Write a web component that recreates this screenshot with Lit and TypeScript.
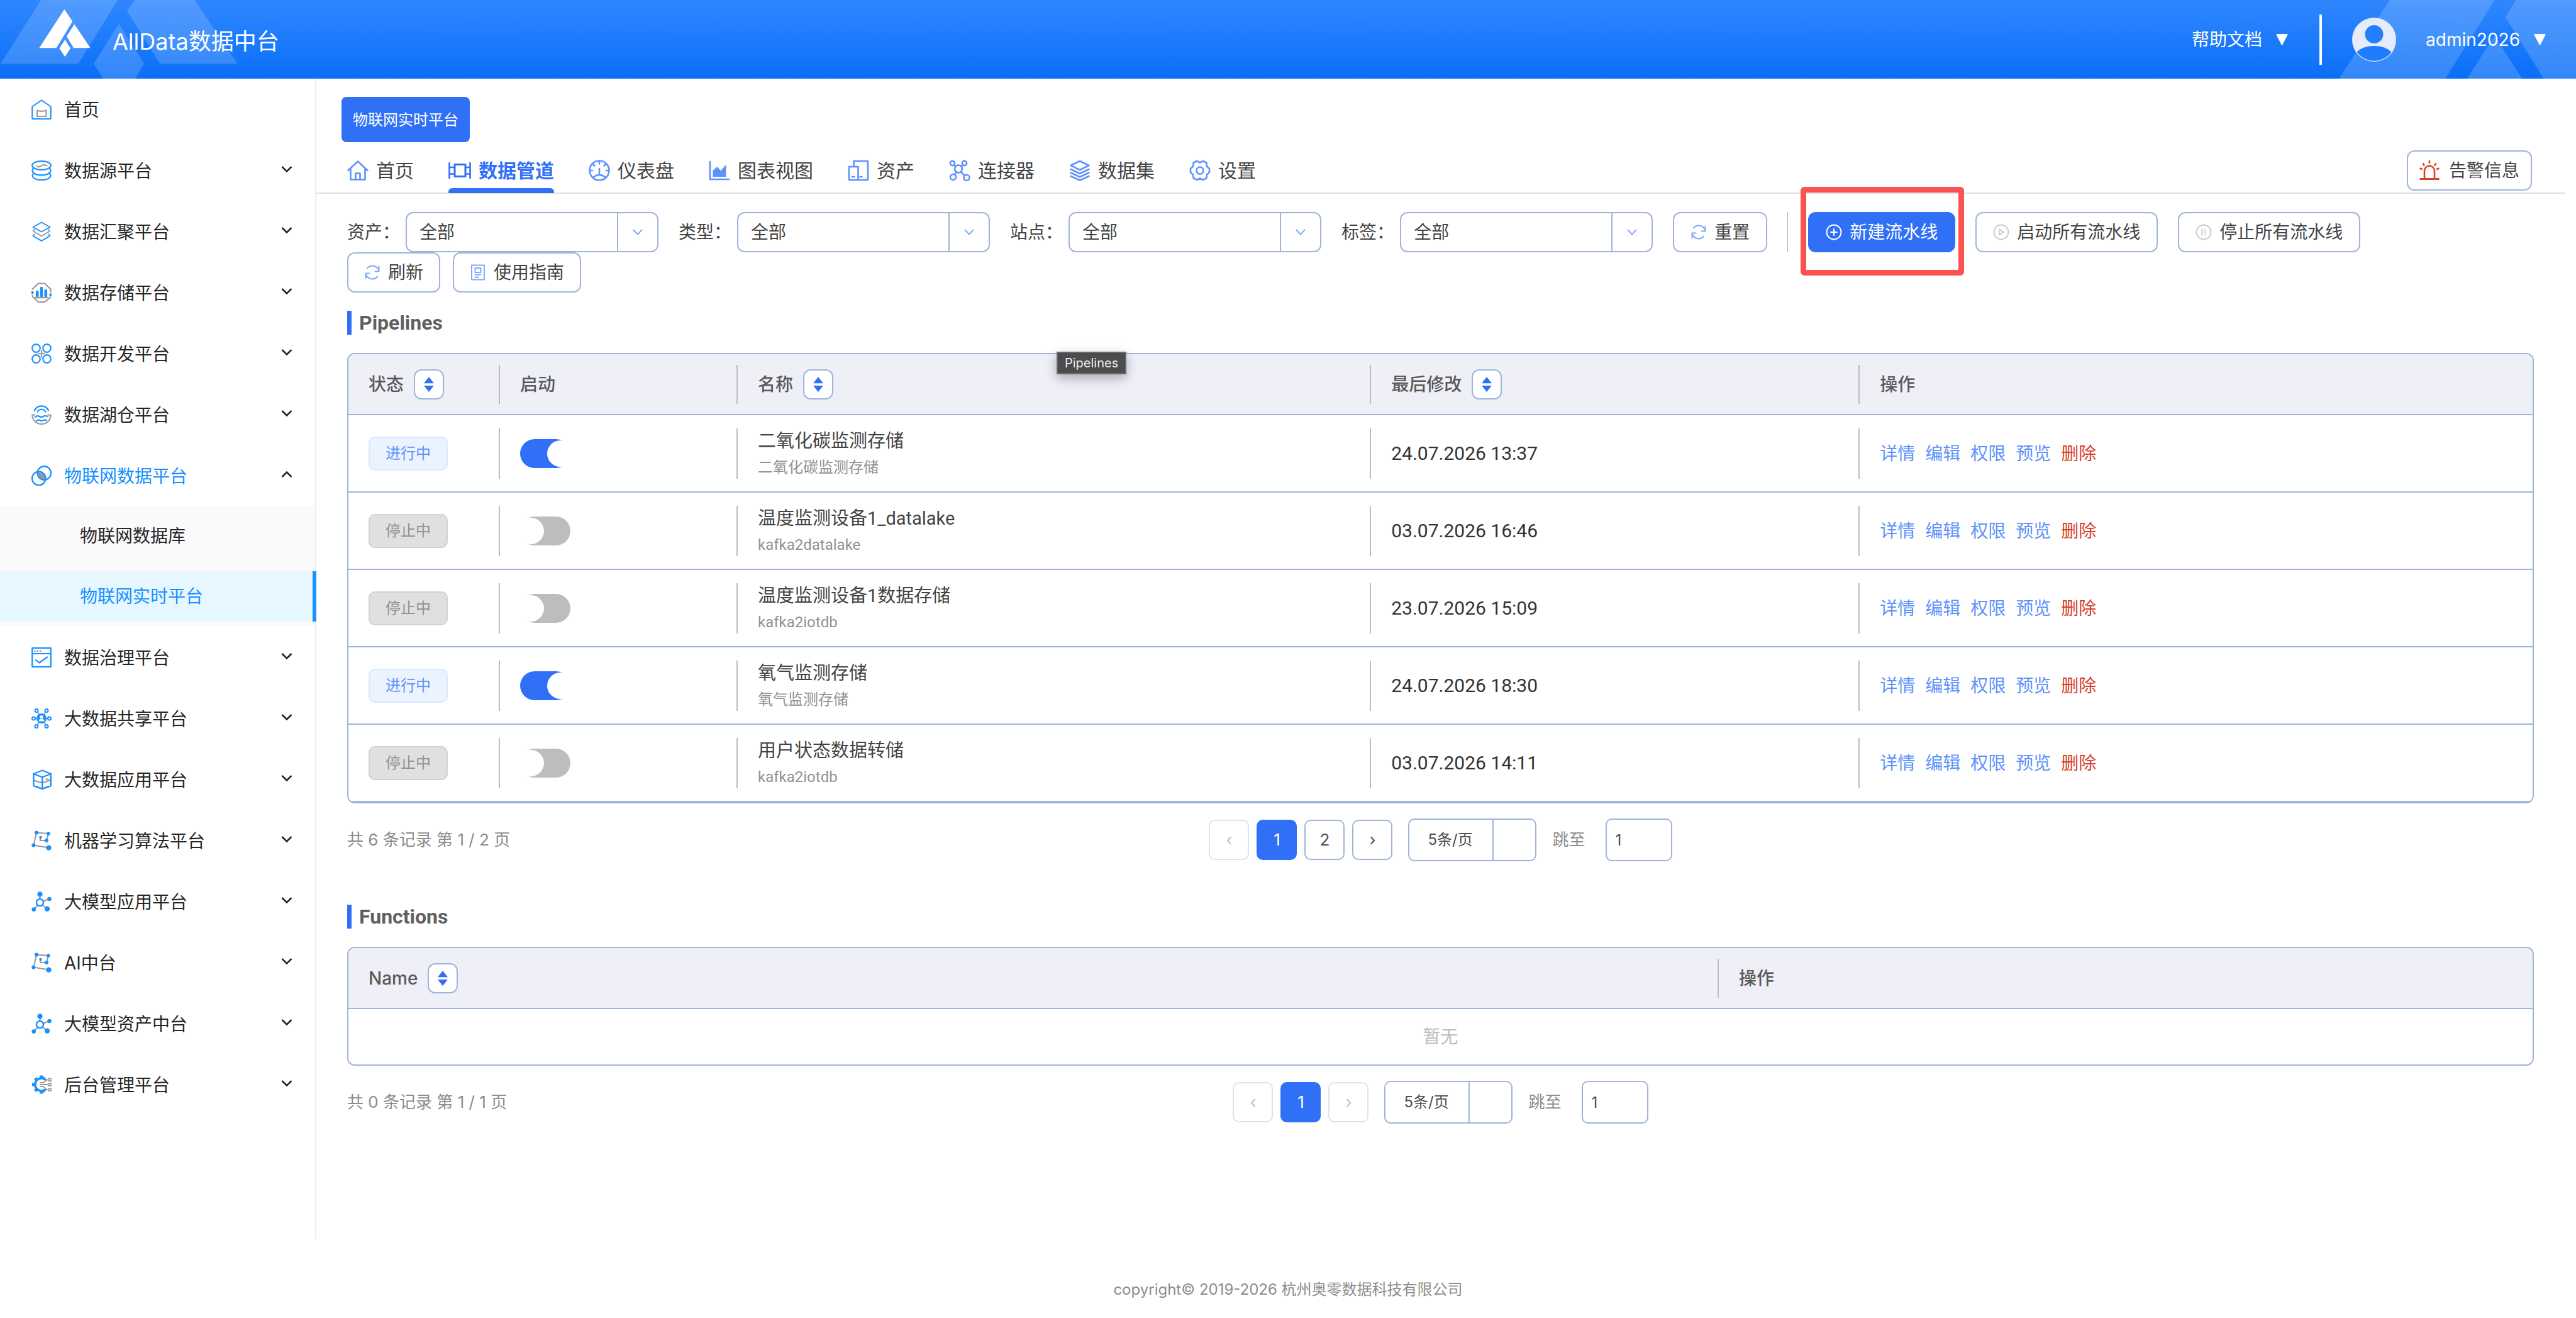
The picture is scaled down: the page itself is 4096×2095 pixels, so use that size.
import { LitElement, html, css, svg, nothing } from "lit";
import type { TemplateResult } from "lit";
import { customElement, property, state } from "lit/decorators.js";
import { classMap } from "lit/directives/class-map.js";

/* ---------- icons ---------- */

const B = "#1890ff";
const G = "#999999";
const T = "#5e92fb";

const menuIcons: Record<string, TemplateResult> = {
  home: svg`<path d="M16 1.2 30.8 11.5V30q0 1-1 1H2.200q-1 0-1-1V11.500Z" stroke=${B} stroke-width="2"/>
    <path d="M9 17.500q7 2.600 14.500 0V27H9Z" stroke=${G} stroke-width="2.200"/>`,
  db: svg`<g stroke=${B} stroke-width="2.200"><ellipse cx="16" cy="8" rx="14.800" ry="6.900"/>
    <path d="M4 12C-1 15 1 23.300 16 23.300S33 15 28 12M4 20C-1 23 1 31 16 31S33 23 28 20"/></g>
    <path d="M8.500 8.500 11 10.500C15 10 17 6.800 20 6.800L24.500 8.500" stroke=${G} stroke-width="2"/>`,
  layers: svg`<path d="M5 12.500 3 15.500 16 23.500 29 15.500 27 12.500" stroke=${G} stroke-width="2"/>
    <path d="M16 1.500 29.500 9 16 16.500 2.500 9ZM4.500 20.500 2.500 23 16 30.800 29.500 23 27.500 20.500" stroke=${B} stroke-width="2"/>`,
  storage: svg`<path d="M1.500 10.500 11 1.500H21L30.500 10.500V15M1.500 20.500V22L11 31H21L30.500 23.500" stroke=${G} stroke-width="2.200"/>
    <path d="M9.200 21.500V15M16 21.500V9M22.800 21.500V13" stroke=${B} stroke-width="4.600"/>
    <path d="M6.500 24H25.500" stroke=${G} stroke-width="2.600"/>
    <circle cx="1.500" cy="16" r="2.200" fill=${B}/><circle cx="30.500" cy="19.500" r="2.200" fill=${B}/>`,
  dev: svg`<g stroke=${B} stroke-width="2.200"><circle cx="7.500" cy="7.500" r="6.300"/><circle cx="24.500" cy="7.500" r="6.300"/>
    <circle cx="7.500" cy="24.500" r="6.300"/><circle cx="24.500" cy="24.500" r="6.300"/></g>
    <path d="M16 11V21M11 16H21" stroke=${G} stroke-width="2.200"/>`,
  lake: svg`<g stroke=${B} stroke-width="2.200"><path d="M5 9.500A12 12 0 0 1 27 9.500M9.500 11.500A7.500 7.500 0 0 1 22.500 11.500"/>
    <path d="M6 20q3.500-3 6.500-1t6 0 7.500 0M8 26q3-2.500 5.500-.8t5 0 5.500 0"/></g>
    <path d="M5.500 16.500H1.200C2 26 8 31 16 31S30 26 30.800 16.500H26.500" stroke=${G} stroke-width="2.200"/>`,
  iot: svg`<path d="M9.400 11.200A11 11 0 0 1 22.700 23.100A11 11 0 0 1 9.400 11.200Z" fill=${G}/>
    <g stroke=${B} stroke-width="2.200"><circle cx="20.300" cy="12" r="10.800"/><circle cx="11.800" cy="20.500" r="10.800"/></g>`,
  govern: svg`<path d="M1.200 1.200H30.800V30.800H1.200ZM1.200 10H30.800M7 20 12.500 24.500 25 15.500" stroke=${B} stroke-width="2.200"/>
    <path d="M5 5.800h.5M9.500 5.800h.5M14 5.800h.5" stroke=${G} stroke-width="2.600"/>`,
  share: svg`<path d="M16 16 8 3.500M16 16 24 3.500M16 16H3M16 16H29M16 16 8 28.500M16 16 24 28.500" stroke=${G} stroke-width="2"/>
    <g stroke=${B} stroke-width="2" fill="#fff"><circle cx="8" cy="3.500" r="2.500"/><circle cx="24" cy="3.500" r="2.500"/>
    <circle cx="3.500" cy="16" r="2.500"/><circle cx="28.500" cy="16" r="2.500"/><circle cx="8" cy="28.500" r="2.500"/><circle cx="24" cy="28.500" r="2.500"/></g>
    <circle cx="16" cy="16" r="8" fill=${B}/><circle cx="16" cy="13.500" r="2.600" fill="#fff"/><path d="M11.500 20.500q0-4 4.500-4t4.500 4Z" fill="#fff"/>`,
  cube: svg`<path d="M6 18Q17 23.500 28.500 17.500L23.500 15" stroke=${G} stroke-width="2.200"/>
    <path d="M17.200 1.500 30.800 7V26L17.200 31 3.500 26V7ZM3.500 7 17.200 12.500 30.800 7M17.200 12.500V31" stroke=${B} stroke-width="2.400"/>`,
  algo: svg`<path d="M3.500 23.500 8 3.500 27 5 24 16H14V11M3.500 23.500 27.500 27.500" stroke=${G} stroke-width="2"/>
    <g fill=${B}><circle cx="8" cy="3.500" r="3"/><circle cx="27" cy="5" r="2.800"/><circle cx="24" cy="16" r="3"/>
    <circle cx="14.500" cy="11" r="2.200"/><circle cx="3.300" cy="23.500" r="3"/><circle cx="27.500" cy="27.600" r="4.200"/></g>`,
  model: svg`<path d="M13.500 17.500V5M13.500 17.500 28.500 12M13.500 17.500 25 28M13.500 17.500 3.700 29" stroke=${G} stroke-width="2.200"/>
    <g fill=${B}><circle cx="13.500" cy="4.400" r="4.200"/><circle cx="28.500" cy="12" r="3.300"/><circle cx="25" cy="27.600" r="4.200"/><circle cx="3.700" cy="28.600" r="3.300"/></g>
    <circle cx="13.500" cy="17.500" r="5.500" stroke=${B} stroke-width="2.400" fill="#fff"/>`,
  admin: svg`<path d="M21.500 7.800A10 10 0 1 0 21.500 24.200" stroke=${B} stroke-width="3.600"/>
    <path d="M15.500 6.500V1.500M15.500 25.500V30.500M6 16H1M9 9 5.800 5.800M9 23 5.800 26.200M20 5.500 21 4.500M20 26.500 21 27.500" stroke=${B} stroke-width="5" stroke-linecap="butt"/>
    <path d="M14 12.800H19L24 8.500H27M14 16H26.500M14 19.200H19L24 23.800H27" stroke=${G} stroke-width="1.800"/>
    <g stroke=${G} stroke-width="1.800"><circle cx="29.300" cy="8.300" r="2.200"/><circle cx="29.300" cy="16" r="2.200"/><circle cx="29.300" cy="24" r="2.200"/></g>`,
};

const tabIcons: Record<string, TemplateResult> = {
  home: svg`<path d="M1.500 17 17 2.500 32.500 17M5.500 14V31.500H28.500V14M13.500 31V21.500H20.500V31" stroke=${T} stroke-width="2.600"/>`,
  pipe: svg`<path d="M1.500 5V29M34.500 5V29M1.500 12H34.500M1.500 22.500H34.500" stroke="currentColor" stroke-width="2.600"/>
    <rect x="10" y="7.500" width="17" height="19" fill="#fff" stroke="currentColor" stroke-width="3"/>`,
  gauge: svg`<g stroke=${T} stroke-width="2.600"><circle cx="17" cy="17" r="15.500"/>
    <path d="M17 14V24M7 28Q17 20 27 28M17 3V6.500M3 17H6M28 17H31M7.500 7.500 9.500 9.500M26.500 7.500 24.500 9.500"/></g>`,
  chart: svg`<path d="M2 3V31H32" stroke=${T} stroke-width="2.600"/><path d="M6.500 27V17L13.500 11 19 17.500 27.500 7.500V27Z" fill=${T}/>`,
  asset: svg`<path d="M9.500 11V2H32V32H2V11H16.500V32M7 27h3.500M19.500 27h3" stroke=${T} stroke-width="2.600"/>`,
  link: svg`<g stroke=${T} stroke-width="2.600"><circle cx="5.500" cy="5.500" r="3.600"/><circle cx="24.500" cy="5.500" r="3.600"/>
    <circle cx="15" cy="14.500" r="6"/><circle cx="6.500" cy="27.500" r="4.500"/><circle cx="28" cy="28.500" r="4.500"/>
    <path d="M8.200 8 10.500 10.500M21.800 8 19.500 10.500M11.800 19.800 9 23.500M18.800 19.200 25 25"/></g>`,
  data: svg`<path d="M17 2 31.500 9 17 16 2.500 9ZM2.500 15 17 22 31.500 15M2.500 20.500 17 27.300 31.500 20.500M2.500 26 17 32.500 31.500 26" stroke=${T} stroke-width="2.600"/>`,
  gear: svg`<path d="M12 2 17 4.500 22 2 27.500 5 28 10.500 32 14V20L28 23.500 27.500 29 22 32 17 29.500 12 32 6.500 29 6 23.500 2 20V14L6 10.500 6.500 5Z" stroke=${T} stroke-width="2.600"/>
    <circle cx="17" cy="17" r="5.500" stroke=${T} stroke-width="2.600"/>`,
};

const buttonIcons: Record<string, TemplateResult> = {
  refresh: svg`<path d="M5 6.500A10.500 10.500 0 0 1 23.500 11.500M23.500 3.500V11.500H17.500M21 19.500A10.500 10.500 0 0 1 2.500 14.500M2.500 22.500V14.500H8.500" stroke="#84a9fa" stroke-width="2"/>`,
  guide: svg`<path d="M3 1.500H23V24.500H3ZM8.500 6H17.500V13H8.500ZM8.500 16.500H17.500M8.500 20.500H13.500" stroke="#84a9fa" stroke-width="2"/>`,
  plus: svg`<path d="M13 8V18M8 13H18" stroke="#fff" stroke-width="2"/><circle cx="13" cy="13" r="11.500" stroke="#fff" stroke-width="2"/>`,
  play: svg`<circle cx="13" cy="13" r="11.500" stroke="#ccc" stroke-width="2"/><path d="M10.500 8.500V17.500L17 13Z" stroke="#ccc" stroke-width="2"/>`,
  pause: svg`<circle cx="13" cy="13" r="11.500" stroke="#ccc" stroke-width="2"/><path d="M10.500 8.500V17.500M15.500 8.500V17.500" stroke="#ccc" stroke-width="2"/>`,
};

const icon = (art: TemplateResult, size: number, width = size) => html`<svg
  class="icon" width=${width} height=${size} viewBox="0 0 ${width} ${size}" fill="none"
  stroke-linejoin="round" stroke-linecap="round" aria-hidden="true">${art}</svg>`;

/* ---------- data ---------- */

interface MenuItem { label: string; icon: string; children?: string[]; leaf?: boolean }

const menu: MenuItem[] = [
  { label: "首页", icon: "home", leaf: true },
  { label: "数据源平台", icon: "db" },
  { label: "数据汇聚平台", icon: "layers" },
  { label: "数据存储平台", icon: "storage" },
  { label: "数据开发平台", icon: "dev" },
  { label: "数据湖仓平台", icon: "lake" },
  { label: "物联网数据平台", icon: "iot", children: ["物联网数据库", "物联网实时平台"] },
  { label: "数据治理平台", icon: "govern" },
  { label: "大数据共享平台", icon: "share" },
  { label: "大数据应用平台", icon: "cube" },
  { label: "机器学习算法平台", icon: "algo" },
  { label: "大模型应用平台", icon: "model" },
  { label: "AI中台", icon: "algo" },
  { label: "大模型资产中台", icon: "model" },
  { label: "后台管理平台", icon: "admin" },
];

const tabs = [
  { label: "首页", icon: "home" },
  { label: "数据管道", icon: "pipe" },
  { label: "仪表盘", icon: "gauge" },
  { label: "图表视图", icon: "chart" },
  { label: "资产", icon: "asset" },
  { label: "连接器", icon: "link" },
  { label: "数据集", icon: "data" },
  { label: "设置", icon: "gear" },
];

const filters = ["资产", "类型", "站点", "标签"];

const pipelines = [
  { running: true, name: "二氧化碳监测存储", note: "二氧化碳监测存储", date: "24.07.2026 13:37" },
  { running: false, name: "温度监测设备1_datalake", note: "kafka2datalake", date: "03.07.2026 16:46" },
  { running: false, name: "温度监测设备1数据存储", note: "kafka2iotdb", date: "23.07.2026 15:09" },
  { running: true, name: "氧气监测存储", note: "氧气监测存储", date: "24.07.2026 18:30" },
  { running: false, name: "用户状态数据转储", note: "kafka2iotdb", date: "03.07.2026 14:11" },
];

const base = css`
  * { box-sizing: border-box; }
  button, select, input { font: inherit; color: inherit; margin: 0; }
  button { cursor: pointer; }
  a { color: inherit; text-decoration: none; }
  .icon { display: block; flex: none; }
`;

/* ---------- header ---------- */

@customElement("top-bar")
class TopBar extends LitElement {
  static styles = [base, css`
    :host { display: block; }
    .bar {
      position: relative; display: flex; align-items: center; height: 125px;
      padding: 0 48px 0 62px; color: #fff; overflow: hidden;
      background: linear-gradient(#2f87ff, #0a6ff8);
    }
    .deco { position: absolute; top: 0; fill: #fff; fill-opacity: 0.17; }
    .left { left: 0; }
    .right { right: 0; }
    .brand, .tools { position: relative; display: flex; align-items: center; }
    .brand { height: 100%; gap: 35px; }
    .brand svg { align-self: flex-start; margin-top: 14px; }
    .title { margin: 0; padding-top: 6px; font-size: 36px; line-height: 48px; font-weight: 400; }
    .tools { margin-left: auto; font-size: 28px; line-height: 40px; }
    .menu { display: flex; align-items: center; gap: 22px; padding: 0; border: 0; background: none; }
    .rule { width: 4px; height: 80px; margin: 0 48px 0 50px; background: #fff; }
    .avatar { margin-right: 47px; }
  `];

  private caret() {
    return html`<svg class="icon" width="19" height="18" viewBox="0 0 19 18" aria-hidden="true">
      <path d="M1.500 1H17.500L9.500 16.500Z" fill="#fff" stroke="#fff" stroke-width="2" stroke-linejoin="round"/></svg>`;
  }

  render() {
    return html`<header class="bar">
      <svg class="deco left" width="380" height="125" viewBox="0 0 415.500 136.700" aria-hidden="true">
        <path d="M71.400 0H204.600L136.400 110.700H1ZM234 0H338.600L412.900 110.700H278.200L220.700 19ZM206.800 41.300 250.700 110.700H162.900ZM162.900 110.700H250.700L235 137H179.600Z"/>
      </svg>
      <svg class="deco right" width="380" height="125" viewBox="4062.500 0 415.500 136.700" aria-hidden="true">
        <path d="M4154 0H4336.600L4250.800 137H4065.700ZM4373.300 0H4478V137H4422L4355.500 30ZM4336 62 4384.700 137H4288.500Z"/>
      </svg>
      <div class="brand">
        <svg width="82" height="77" viewBox="67.500 15.500 90 84" fill="#fff" aria-hidden="true">
          <path d="M111.800 16 126 37.300 97.900 83.700H67.900ZM129.300 42 157.100 83.700H127.900L115.700 63.300ZM112.900 69 122.500 84 112.900 99 103 84Z"/>
        </svg>
        <h1 class="title">AllData数据中台</h1>
      </div>
      <div class="tools">
        <button class="menu" type="button">帮助文档 ${this.caret()}</button>
        <div class="rule"></div>
        <svg class="icon avatar" width="70" height="70" viewBox="0 0 70 70" aria-hidden="true">
          <circle cx="35" cy="35" r="35" fill="#e6ebfa"/>
          <circle cx="35" cy="26.500" r="14.500" fill="#2380fd"/>
          <path d="M7.500 54.500Q17 45 35 45T62.500 54.500A33.800 33.800 0 0 1 7.500 54.500Z" fill="#1f7cfc"/>
        </svg>
        <button class="menu" type="button">admin2026 ${this.caret()}</button>
      </div>
    </header>`;
  }
}

/* ---------- sidebar ---------- */

@customElement("side-menu")
class SideMenu extends LitElement {
  @state() private open = "物联网数据平台";
  @state() private current = "物联网实时平台";

  static styles = [base, css`
    :host { display: block; flex: none; width: 503px; border-right: 2px solid #eeeeee; }
    ul { margin: 0; padding: 0; list-style: none; }
    .entry { display: flow-root; }
    .item {
      display: flex; align-items: center; width: 100%; height: 80px; margin: 9px 0 8px;
      padding: 0 36px 0 50px; border: 0; background: none; gap: 20px;
      font-size: 28px; line-height: 40px; color: #262626; text-align: left;
    }
    .label { flex: 1; padding-top: 2px; }
    .opened .label { color: #1890ff; }
    .sub { display: grid; gap: 16px; padding: 8px 0; background: #fafafa; }
    .leaf {
      display: flex; align-items: center; height: 80px; padding-left: 127px;
      font-size: 28px; line-height: 40px; color: #262626;
    }
    .leaf.on { margin-right: -2px; border-right: 6px solid #1890ff; background: #e6f7ff; color: #1890ff; }
    .arrow { margin-bottom: 5px; }
    .up { transform: rotate(180deg); }
  `];

  render() {
    return html`<nav aria-label="主菜单"><ul>
      ${menu.map((m) => {
        const opened = !!m.children && m.label === this.open;
        return html`<li class="entry">
          <button type="button" class=${classMap({ item: true, opened })}
            @click=${() => { if (m.children) this.open = opened ? "" : m.label; }}>
            ${icon(menuIcons[m.icon], 32)}
            <span class="label">${m.label}</span>
            ${m.leaf ? nothing : html`<svg class=${classMap({ icon: true, arrow: true, up: opened })} width="18" height="12" viewBox="0 0 18 12" fill="none" aria-hidden="true">
              <path d="M1.500 2 9 9.500 16.500 2" stroke="#222" stroke-width="2.600"/></svg>`}
          </button>
          ${opened ? html`<ul class="sub">${m.children!.map((c) => html`<li>
            <a href="#" class=${classMap({ leaf: true, on: c === this.current })}
              @click=${(e: Event) => { e.preventDefault(); this.current = c; }}>${c}</a></li>`)}</ul>` : nothing}
        </li>`;
      })}
    </ul></nav>`;
  }
}

/* ---------- pagination ---------- */

@customElement("page-bar")
class PageBar extends LitElement {
  @property({ type: Number }) total = 0;
  @property({ type: Number }) pages = 1;
  @property({ type: Number }) page = 1;

  static styles = [base, css`
    :host { display: block; margin-top: 24px; font-size: 26px; line-height: 36px; color: #8c8c8c; }
    .row { display: grid; grid-template-columns: 1fr auto 1fr; align-items: center; height: 68px; }
    .controls { display: flex; align-items: center; gap: 12px; }
    .page {
      width: 64px; height: 64px; padding: 0; border: 2px solid #a0b3dc; border-radius: 10px;
      background: #fff; color: #4d4d4d;
    }
    .page.on { border-color: #3070f6; background: #3070f6; color: #fff; }
    .page:disabled { border-color: #dbe3f3; color: #bfbfbf; cursor: default; }
    .size {
      display: flex; width: 204px; height: 68px; margin-left: 13px;
      border: 2px solid #a0b3dc; border-radius: 10px; overflow: hidden;
    }
    .size select {
      flex: 1; min-width: 0; padding: 0 0 0 29px; border: 0; outline: 0; appearance: none;
      background: none; font-size: 24px; color: #4d4d4d;
    }
    .cap { width: 68px; border-left: 2px solid #a0b3dc; }
    .jump { display: flex; align-items: center; gap: 32px; margin-left: 13px; }
    .jump input {
      width: 106px; height: 68px; padding: 0 14px; border: 2px solid #a0b3dc; border-radius: 10px;
      background: #fff; font-size: 24px; color: #4d4d4d; outline: 0;
    }
  `];

  render() {
    const nums = Array.from({ length: this.pages }, (_, i) => i + 1);
    return html`<div class="row">
      <span>共 ${this.total} 条记录 第 ${this.page} / ${this.pages} 页</span>
      <div class="controls">
        <button class="page" type="button" aria-label="上一页" ?disabled=${this.page <= 1}
          @click=${() => (this.page -= 1)}>‹</button>
        ${nums.map((n) => html`<button type="button" class=${classMap({ page: true, on: n === this.page })}
          @click=${() => (this.page = n)}>${n}</button>`)}
        <button class="page" type="button" aria-label="下一页" ?disabled=${this.page >= this.pages}
          @click=${() => (this.page += 1)}>›</button>
        <div class="size"><select aria-label="每页条数"><option>5条/页</option></select><span class="cap"></span></div>
        <label class="jump">跳至<input type="text" inputmode="numeric" .value=${String(this.page)}></label>
      </div>
    </div>`;
  }
}

/* ---------- workspace ---------- */

@customElement("iot-workspace")
class IotWorkspace extends LitElement {
  @state() private tab = "数据管道";

  static styles = [base, css`
    :host { display: block; flex: 1; min-width: 0; padding-top: 29px; color: #444; }
    .crumb {
      display: block; height: 72px; margin-left: 40px; padding: 2px 18px 0; border: 0; border-radius: 8px;
      background: #3070f6; color: #fff; font-size: 24px; line-height: 36px;
    }
    .tabs {
      display: flex; align-items: center; margin-right: 18px; padding: 10px 52px 0 49px;
      border-bottom: 2px solid #e0e0e0;
    }
    .strip { display: flex; gap: 55px; }
    .tab {
      position: relative; display: flex; align-items: center; gap: 12px; height: 70px; padding: 0;
      border: 0; background: none; font-size: 30px; line-height: 40px; color: #444;
    }
    .tab.on { color: #3070f6; font-weight: 700; }
    .tab.on::after {
      content: ""; position: absolute; left: 0; right: 0; bottom: -1px; height: 8px;
      border-radius: 6px 6px 0 0; background: #3070f6;
    }
    .btn {
      display: flex; align-items: center; gap: 12px; height: 64px; padding: 0 26px;
      border: 2px solid #a0b3dc; border-radius: 12px; background: #fff;
      font-size: 28px; line-height: 40px; color: #444; white-space: nowrap;
    }
    .alarm { margin-left: auto; padding: 0 18px; gap: 15px; }
    .primary { border-color: #3070f6; background: #3070f6; color: #fff; }
    .tools { display: flex; flex-wrap: wrap; column-gap: 32px; padding: 29px 67px 0 49px; font-size: 28px; line-height: 40px; }
    .filter { display: flex; align-items: center; gap: 9px; }
    .select {
      display: flex; width: 402px; height: 64px; border: 2px solid #a0b3dc; border-radius: 12px;
    }
    .select select {
      flex: 1; min-width: 0; padding: 0 0 0 20px; border: 0; outline: 0; appearance: none; background: none;
    }
    .cap {
      display: flex; align-items: center; justify-content: center; width: 64px;
      border-left: 2px solid #a0b3dc;
    }
    .split { width: 1px; height: 64px; background: #b0b0b0; }
    .focus { position: relative; }
    .ring {
      position: absolute; inset: -40px -14px -37px -12px; border: 9px solid #fb5352; border-radius: 6px;
      pointer-events: none;
    }
    .pair { display: flex; gap: 20px; }
    .pair .btn { padding: 0 25px; }
    .panel { position: relative; padding: 29px 67px 0 49px; }
    .panel + .panel { padding-top: 69px; }
    h2 {
      margin: 0 0 29px; padding-left: 12px; border-left: 7px solid #3070f6;
      font: 700 32px/38px Roboto, "Noto Sans CJK SC", sans-serif; color: #606060;
    }
    .frame { border: 2px solid #a0b3dc; border-radius: 12px; overflow: hidden; }
    table { width: 100%; border-collapse: separate; border-spacing: 0; table-layout: fixed; }
    .c-state { width: 241px; }
    .c-on { width: 378px; }
    .c-name { width: 29%; }
    .c-date { width: 777px; }
    .c-ops { width: 1294px; }
    th, td { padding: 0; border-bottom: 2px solid #a0b3dc; font-weight: 400; text-align: left; }
    thead { background: #efeff8; color: #595959; font-size: 28px; line-height: 40px; }
    .hcell, .cell { display: flex; align-items: center; padding-left: 32px; border-right: 2px solid #bdbdbd; }
    .hcell { height: 62px; margin: 17px 0 16px; gap: 16px; font-weight: 500; }
    .cell { height: 80px; margin: 21px 0 20px; }
    th:last-child .hcell, td:last-child .cell { border-right: 0; }
    .sort {
      display: flex; align-items: center; justify-content: center; width: 48px; height: 48px; padding: 0;
      border: 2px solid #a0b3dc; border-radius: 12px; background: #fff;
    }
    .badge {
      width: 126px; height: 54px; border: 2px solid #d9e9ff; border-radius: 10px; background: #ebf3ff;
      color: #5e92fb; font-size: 24px; line-height: 50px; text-align: center;
    }
    .badge.off { border-color: #d3d3d3; background: #e0e0e0; color: #909090; }
    .switch {
      position: relative; width: 80px; height: 46px; margin: 0; appearance: none;
      border-radius: 23px; background: #bdbdbd;
    }
    .switch::before {
      content: ""; position: absolute; top: 2px; left: -4px; width: 42px; height: 42px;
      border-radius: 50%; background: #fff;
    }
    .switch:checked { background: #3070f6; }
    .switch:checked::before { left: 43px; }
    .name { font: 400 29px/44px Roboto, "Noto Sans CJK SC", sans-serif; color: #444; }
    .note { font: 400 24px/40px Roboto, "Noto Sans CJK SC", sans-serif; color: #929292; }
    .date { font: 400 30px/40px Roboto, "Noto Sans CJK SC", sans-serif; color: #333; }
    .ops { gap: 16px; font-size: 28px; line-height: 40px; color: #5e92fb; }
    .danger { color: #d9402b; }
    .empty { height: 88px; border-bottom: 0; font-size: 28px; text-align: center; color: #bdbdbd; }
    .tip {
      position: absolute; left: 1177px; top: 94px; padding: 0 11px; border: 2px solid #6a6a6c;
      background: #4b4c4e; color: #ededed; font-size: 20px; line-height: 32px;
      box-shadow: 0 6px 18px rgba(0, 0, 0, 0.3);
    }
  `];

  private sorter() {
    return html`<button class="sort" type="button" aria-label="排序">
      <svg class="icon" width="16" height="24" viewBox="0 0 16 24" fill="#3070f6" aria-hidden="true">
        <path d="M8 0 16 10.200H0ZM0 14H16L8 24Z"/></svg></button>`;
  }

  private btn(label: string, art: string, cls = "") {
    return html`<button type="button" class="btn ${cls}">${icon(buttonIcons[art], 26)}${label}</button>`;
  }

  render() {
    return html`
      <button class="crumb" type="button">物联网实时平台</button>
      <div class="tabs">
        <div class="strip" role="tablist">
          ${tabs.map((t) => html`<button type="button" role="tab" aria-selected=${t.label === this.tab}
            class=${classMap({ tab: true, on: t.label === this.tab })} @click=${() => (this.tab = t.label)}>
            ${icon(tabIcons[t.icon], 34, t.icon === "pipe" ? 36 : 34)}${t.label}</button>`)}
        </div>
        <button type="button" class="btn alarm">
          <svg class="icon" width="32" height="32" viewBox="0 0 32 32" fill="none" stroke="#d9402b" stroke-width="2.600" aria-hidden="true">
            <path d="M8 29V16.500a8 8 0 0 1 16 0V29M16 0V5M5.500 4.500 8 8.500M26.500 4.500 24 8.500M.5 12.500 5 14.200M31.500 12.500 27 14.200"/>
            <path d="M.5 29.500H31.500" stroke-width="3"/></svg>告警信息</button>
      </div>
      <div class="tools">
        ${filters.map((f) => html`<label class="filter">${f}：<span class="select">
          <select><option>全部</option></select><span class="cap">
            <svg class="icon" width="16" height="10" viewBox="0 0 16 10" fill="none" aria-hidden="true">
              <path d="M1 1 8 8.500 15 1" stroke="#84a9fa" stroke-width="2"/></svg></span></span></label>`)}
        ${this.btn("重置", "refresh")}
        <span class="split"></span>
        <div class="focus">${this.btn("新建流水线", "plus", "primary")}<span class="ring"></span></div>
        ${this.btn("启动所有流水线", "play")}
        ${this.btn("停止所有流水线", "pause")}
        <div class="pair">${this.btn("刷新", "refresh")}${this.btn("使用指南", "guide")}</div>
      </div>
      <section class="panel">
        <h2>Pipelines</h2>
        <div class="frame"><table>
          <colgroup><col class="c-state"><col class="c-on"><col class="c-name"><col class="c-date"><col></colgroup>
          <thead><tr>
            <th><div class="hcell">状态${this.sorter()}</div></th>
            <th><div class="hcell">启动</div></th>
            <th><div class="hcell">名称${this.sorter()}</div></th>
            <th><div class="hcell">最后修改${this.sorter()}</div></th>
            <th><div class="hcell">操作</div></th>
          </tr></thead>
          <tbody>${pipelines.map((p) => html`<tr>
            <td><div class="cell"><span class=${classMap({ badge: true, off: !p.running })}>${p.running ? "进行中" : "停止中"}</span></div></td>
            <td><div class="cell"><input class="switch" type="checkbox" role="switch" aria-label="启动" .checked=${p.running}></div></td>
            <td><div class="cell"><div><div class="name">${p.name}</div><div class="note">${p.note}</div></div></div></td>
            <td><div class="cell date">${p.date}</div></td>
            <td><div class="cell ops"><a href="#">详情</a><a href="#">编辑</a><a href="#">权限</a><a href="#">预览</a><a href="#" class="danger">删除</a></div></td>
          </tr>`)}</tbody>
        </table></div>
        <div class="tip" role="tooltip">Pipelines</div>
        <page-bar .total=${6} .pages=${2}></page-bar>
      </section>
      <section class="panel">
        <h2>Functions</h2>
        <div class="frame"><table>
          <colgroup><col><col class="c-ops"></colgroup>
          <thead><tr>
            <th><div class="hcell">Name${this.sorter()}</div></th>
            <th><div class="hcell">操作</div></th>
          </tr></thead>
          <tbody><tr><td class="empty" colspan="2">暂无</td></tr></tbody>
        </table></div>
        <page-bar .total=${0} .pages=${1}></page-bar>
      </section>`;
  }
}

/* ---------- page ---------- */

@customElement("app-root")
class AppRoot extends LitElement {
  static styles = [base, css`
    :host {
      display: flex; flex-direction: column; min-height: 100vh; background: #fff;
      font-family: Inter, "Noto Sans CJK SC", sans-serif; font-size: 28px; line-height: 40px;
    }
    .body { display: flex; flex: 1; }
    .foot { padding: 64px 0 28px; font-size: 24px; line-height: 34px; text-align: center; color: #8c8c8c; }
  `];

  render() {
    return html`<top-bar></top-bar>
      <div class="body"><side-menu></side-menu><iot-workspace></iot-workspace></div>
      <footer class="foot">copyright© 2019-2026 杭州奥零数据科技有限公司</footer>`;
  }
}
